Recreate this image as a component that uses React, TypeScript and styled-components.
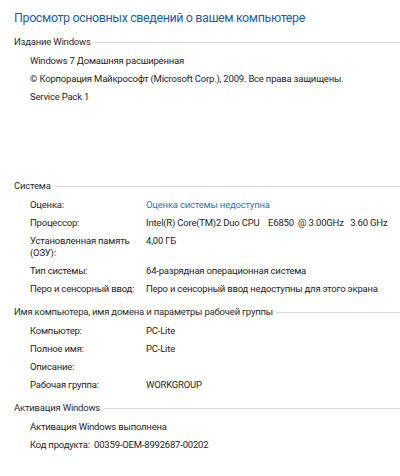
import styled, { createGlobalStyle } from "styled-components";

const GlobalStyle = createGlobalStyle`
  html, body {
    margin: 0;
    padding: 0;
    background: #ffffff;
  }
  body {
    font-family: Roboto, "Noto Sans", sans-serif;
    color: #1e1e1e;
  }
`;

type Row = { label: string; value: string; link?: boolean };

const systemRows: Row[] = [
  { label: "Оценка:", value: "Оценка системы недоступна", link: true },
  {
    label: "Процессор:",
    value: "Intel(R) Core(TM)2 Duo CPU    E6850  @ 3.00GHz   3.60 GHz",
  },
  { label: "Установленная память (ОЗУ):", value: "4,00 ГБ" },
  { label: "Тип системы:", value: "64-разрядная операционная система" },
  {
    label: "Перо и сенсорный ввод:",
    value: "Перо и сенсорный ввод недоступны для этого экрана",
  },
];

const nameRows: Row[] = [
  { label: "Компьютер:", value: "PC-Lite" },
  { label: "Полное имя:", value: "PC-Lite" },
  { label: "Описание:", value: "" },
  { label: "Рабочая группа:", value: "WORKGROUP" },
];

const App = () => (
  <>
    <GlobalStyle />
    <Page>
      <Title>Просмотр основных сведений о вашем компьютере</Title>

      <Section $minHeight={133}>
        <SectionHeader>
          <span>Издание Windows</span>
          <Rule />
        </SectionHeader>
        <Lines>
          <Line>Windows 7 Домашняя расширенная</Line>
          <Line>© Корпорация Майкрософт (Microsoft Corp.), 2009. Все права защищены.</Line>
          <Line>Service Pack 1</Line>
        </Lines>
      </Section>

      <Section>
        <SectionHeader>
          <span>Система</span>
          <Rule />
        </SectionHeader>
        <Grid>
          {systemRows.map((row) => (
            <Pair key={row.label}>
              <Label>{row.label}</Label>
              <Value $link={row.link}>{row.value}</Value>
            </Pair>
          ))}
        </Grid>
      </Section>

      <Section>
        <SectionHeader>
          <span>Имя компьютера, имя домена и параметры рабочей группы</span>
          <Rule />
        </SectionHeader>
        <Grid>
          {nameRows.map((row) => (
            <Pair key={row.label}>
              <Label>{row.label}</Label>
              <Value>{row.value}</Value>
            </Pair>
          ))}
        </Grid>
      </Section>

      <Section>
        <SectionHeader>
          <span>Активация Windows</span>
          <Rule />
        </SectionHeader>
        <Lines>
          <Line>Активация Windows выполнена</Line>
          <Line>Код продукта:  00359-OEM-8992687-00202</Line>
        </Lines>
      </Section>
    </Page>
  </>
);

const Page = styled.div`
  width: 400px;
  height: 476px;
  box-sizing: border-box;
  padding: 8px 0 0 14px;
  overflow: hidden;
  font-size: 9.5px;
  letter-spacing: -0.2px;
  line-height: 12px;
`;

const Title = styled.h1`
  margin: 0 0 8px;
  font-size: 12.5px;
  letter-spacing: -0.4px;
  line-height: 20px;
  font-weight: 400;
  color: #1e5ea8;
`;

const Section = styled.section<{ $minHeight?: number }>`
  display: flex;
  flex-direction: column;
  gap: 7px;
  margin-bottom: 11px;
  min-height: ${({ $minHeight }) => ($minHeight ? `${$minHeight}px` : "auto")};
`;

const SectionHeader = styled.div`
  display: flex;
  align-items: center;
  gap: 4px;
  height: 12px;
  color: #2b2b2b;
  white-space: nowrap;
`;

const Rule = styled.div`
  flex: 1;
  height: 1px;
  background: #d6d9dc;
  margin-top: 1px;
`;

const Lines = styled.div`
  display: flex;
  flex-direction: column;
  gap: 6px;
  padding-left: 16px;
`;

const Line = styled.div`
  white-space: pre;
  height: 12px;
`;

const Grid = styled.div`
  display: flex;
  flex-direction: column;
  gap: 6px;
  padding-left: 16px;
`;

const Pair = styled.div`
  display: grid;
  grid-template-columns: 116px 1fr;
  min-height: 12px;
`;

const Label = styled.div`
  padding-right: 2px;
`;

const Value = styled.div<{ $link?: boolean }>`
  white-space: pre;
  color: ${({ $link }) => ($link ? "#2f74c0" : "inherit")};
`;

export default App;
